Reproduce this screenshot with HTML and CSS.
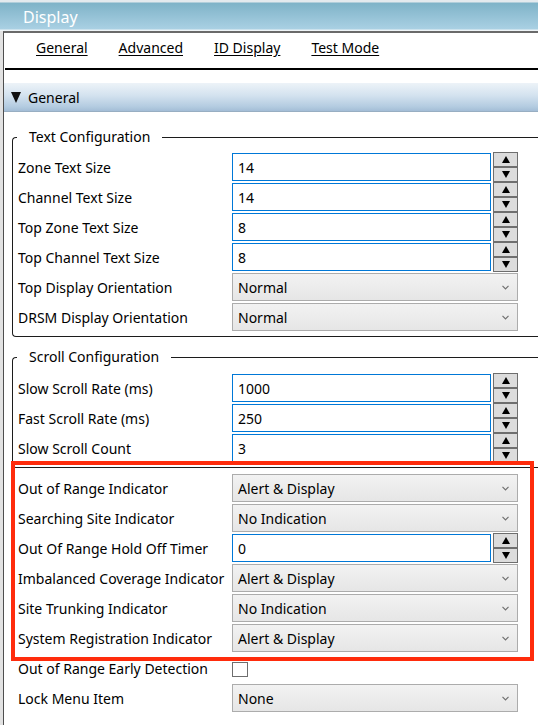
FILE: index.html
```html
<!DOCTYPE html>
<html>
<head>
<meta charset="utf-8">
<link rel="stylesheet" href="styles.css">
</head>
<body>
<div class="window">
  <div class="titlebar">Display</div>
  <div class="frame">
    <nav class="tabs">
      <a>General</a>
      <a>Advanced</a>
      <a>ID Display</a>
      <a>Test Mode</a>
    </nav>
    <div class="exp-head"><span class="tri"></span>General</div>
    <div class="exp-body">
      <fieldset class="group">
        <legend>Text Configuration</legend>
        <div class="form">
          <span class="lbl">Zone Text Size</span>
          <div class="spin"><div class="input">14</div><div class="btns"><span class="up"></span><span class="down"></span></div></div>
          <span class="lbl">Channel Text Size</span>
          <div class="spin"><div class="input">14</div><div class="btns"><span class="up"></span><span class="down"></span></div></div>
          <span class="lbl">Top Zone Text Size</span>
          <div class="spin"><div class="input">8</div><div class="btns"><span class="up"></span><span class="down"></span></div></div>
          <span class="lbl">Top Channel Text Size</span>
          <div class="spin"><div class="input">8</div><div class="btns"><span class="up"></span><span class="down"></span></div></div>
          <span class="lbl">Top Display Orientation</span>
          <div class="select">Normal<svg width="7" height="5" viewBox="0 0 7 5"><path d="M0.5 0.8 L3.5 3.8 L6.5 0.8" fill="none" stroke="#707070" stroke-width="1.2"/></svg></div>
          <span class="lbl">DRSM Display Orientation</span>
          <div class="select">Normal<svg width="7" height="5" viewBox="0 0 7 5"><path d="M0.5 0.8 L3.5 3.8 L6.5 0.8" fill="none" stroke="#707070" stroke-width="1.2"/></svg></div>
        </div>
      </fieldset>
      <fieldset class="group group-scroll">
        <legend>Scroll Configuration</legend>
        <div class="form">
          <span class="lbl">Slow Scroll Rate (ms)</span>
          <div class="spin"><div class="input">1000</div><div class="btns"><span class="up"></span><span class="down"></span></div></div>
          <span class="lbl">Fast Scroll Rate (ms)</span>
          <div class="spin"><div class="input">250</div><div class="btns"><span class="up"></span><span class="down"></span></div></div>
          <span class="lbl">Slow Scroll Count</span>
          <div class="spin"><div class="input">3</div><div class="btns"><span class="up"></span><span class="down"></span></div></div>
        </div>
      </fieldset>
      <div class="form loose">
        <span class="lbl">Out of Range Indicator</span>
        <div class="select">Alert &amp; Display<svg width="7" height="5" viewBox="0 0 7 5"><path d="M0.5 0.8 L3.5 3.8 L6.5 0.8" fill="none" stroke="#707070" stroke-width="1.2"/></svg></div>
        <span class="lbl">Searching Site Indicator</span>
        <div class="select">No Indication<svg width="7" height="5" viewBox="0 0 7 5"><path d="M0.5 0.8 L3.5 3.8 L6.5 0.8" fill="none" stroke="#707070" stroke-width="1.2"/></svg></div>
        <span class="lbl">Out Of Range Hold Off Timer</span>
        <div class="spin"><div class="input">0</div><div class="btns"><span class="up"></span><span class="down"></span></div></div>
        <span class="lbl">Imbalanced Coverage Indicator</span>
        <div class="select">Alert &amp; Display<svg width="7" height="5" viewBox="0 0 7 5"><path d="M0.5 0.8 L3.5 3.8 L6.5 0.8" fill="none" stroke="#707070" stroke-width="1.2"/></svg></div>
        <span class="lbl">Site Trunking Indicator</span>
        <div class="select">No Indication<svg width="7" height="5" viewBox="0 0 7 5"><path d="M0.5 0.8 L3.5 3.8 L6.5 0.8" fill="none" stroke="#707070" stroke-width="1.2"/></svg></div>
        <span class="lbl">System Registration Indicator</span>
        <div class="select">Alert &amp; Display<svg width="7" height="5" viewBox="0 0 7 5"><path d="M0.5 0.8 L3.5 3.8 L6.5 0.8" fill="none" stroke="#707070" stroke-width="1.2"/></svg></div>
        <span class="lbl">Out of Range Early Detection</span>
        <div class="checkcell"><span class="check"></span></div>
        <span class="lbl">Lock Menu Item</span>
        <div class="select">None<svg width="7" height="5" viewBox="0 0 7 5"><path d="M0.5 0.8 L3.5 3.8 L6.5 0.8" fill="none" stroke="#707070" stroke-width="1.2"/></svg></div>
      </div>
    </div>
  </div>
  <div class="highlight"></div>
</div>
</body>
</html>
```

FILE: styles.css
```css
html, body {
  margin: 0;
  padding: 0;
}
body {
  width: 538px;
  height: 725px;
  overflow: hidden;
  background: #e2e2e2;
  font-family: "Noto Sans", "Open Sans", sans-serif;
  font-size: 14px;
  color: #000;
}
.window {
  position: relative;
  height: 725px;
}
.titlebar {
  box-sizing: border-box;
  height: 31px;
  padding: 3px 0 0 23px;
  display: flex;
  align-items: center;
  color: #fff;
  font-size: 16px;
  background: linear-gradient(to bottom, #e4eaee 0, #e4eaee 2px, #7fb3c8 3px, #a9d0e3 29px, #eef4f7 30px);
}
.frame {
  margin-left: 3px;
  height: 694px;
  border-left: 1px solid #4e4e4e;
  border-top: 2px solid #6a6a6a;
  background: #fff;
}
.tabs {
  box-sizing: border-box;
  height: 37px;
  margin-left: 1px;
  padding: 0 0 6px 31px;
  display: flex;
  align-items: center;
  gap: 31px;
  border-bottom: 2px solid #000;
}
.tabs a {
  text-decoration: underline;
  text-underline-offset: 2px;
  color: #000;
}
.exp-head {
  box-sizing: border-box;
  height: 29px;
  margin-top: 13px;
  padding-left: 7px;
  display: flex;
  align-items: center;
  background: linear-gradient(to bottom, #edf3f8 0%, #d3e2ef 45%, #b3cbe0 85%, #a3bdd6 100%);
  border-bottom: 1px solid #98aec2;
}
.tri {
  width: 0;
  height: 0;
  margin-right: 7px;
  border-left: 5.5px solid transparent;
  border-right: 5.5px solid transparent;
  border-top: 11px solid #111;
}
.exp-body {
  padding-left: 8px;
}
.group {
  margin: 15px 0 0 0;
  padding: 6px 0 5px 5px;
  border: 1px solid #1c1c1c;
  border-right: 0;
  border-radius: 4px 0 0 4px;
  min-width: 0;
}
.group-scroll {
  margin-top: 10px;
  padding-top: 7px;
}
.group legend {
  margin-left: -1px;
  padding: 0 12px;
  height: 20px;
  line-height: 20px;
}
.form {
  display: grid;
  grid-template-columns: 214px 286px;
  grid-auto-rows: 28px;
  row-gap: 2px;
  align-items: center;
}
.form.loose {
  margin-top: 6px;
  padding-left: 6px;
}
.lbl {
  white-space: nowrap;
}
.spin {
  display: flex;
  height: 28px;
  gap: 2px;
}
.input {
  box-sizing: border-box;
  width: 259px;
  height: 28px;
  padding-left: 5px;
  display: flex;
  align-items: center;
  border: 1px solid #0078d7;
  background: #fff;
}
.btns {
  width: 25px;
  height: 30px;
  margin-top: -1px;
  display: flex;
  flex-direction: column;
}
.btns span {
  box-sizing: border-box;
  height: 15px;
  display: flex;
  align-items: center;
  justify-content: center;
  border: 1px solid #6e6e6e;
  background: #dcdcdc;
}
.btns .up::before {
  content: "";
  border-left: 4px solid transparent;
  border-right: 4px solid transparent;
  border-bottom: 7px solid #000;
}
.btns .down::before {
  content: "";
  border-left: 4px solid transparent;
  border-right: 4px solid transparent;
  border-top: 7px solid #000;
}
.select {
  box-sizing: border-box;
  height: 28px;
  padding: 0 8px 0 5px;
  display: flex;
  align-items: center;
  justify-content: space-between;
  border: 1px solid #acacac;
  background: linear-gradient(to bottom, #f2f2f2, #e6e6e6);
}
.checkcell {
  height: 28px;
  display: flex;
  align-items: center;
}
.check {
  box-sizing: border-box;
  width: 16px;
  height: 15px;
  margin-top: 3px;
  border: 1px solid #6e6e6e;
  background: #fff;
}
.highlight {
  position: absolute;
  left: 11px;
  top: 461px;
  width: 523px;
  height: 200px;
  box-sizing: border-box;
  border: 4px solid #ff2c0c;
}
```
